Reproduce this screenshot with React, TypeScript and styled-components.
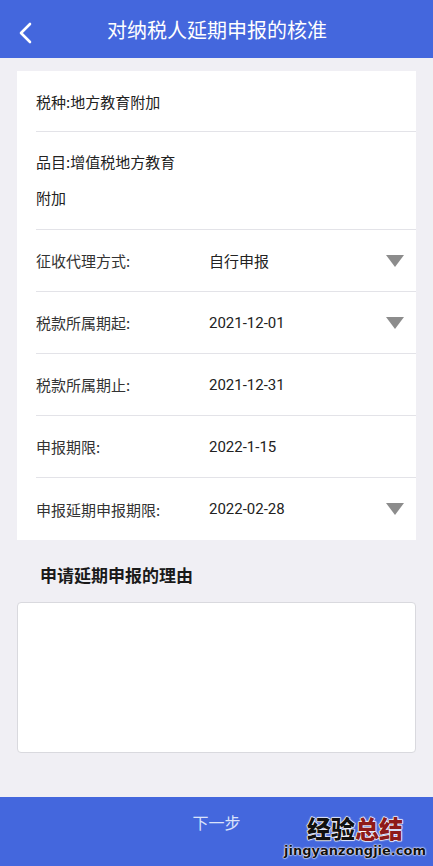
import React from "react";
import styled, { createGlobalStyle } from "styled-components";

const GlobalStyle = createGlobalStyle`
  html, body {
    margin: 0;
    padding: 0;
    background: #f0eff4;
    font-family: "Noto Sans CJK SC", Roboto, "Noto Sans", sans-serif;
  }
  * { box-sizing: border-box; }
`;

const Page = styled.div`
  width: 433px;
  height: 866px;
  display: flex;
  flex-direction: column;
  background: #f0eff4;
  position: relative;
`;

const Header = styled.div`
  height: 58px;
  background: #4467dd;
  display: flex;
  align-items: center;
  justify-content: center;
  position: relative;
  color: #fff;
  font-size: 20px;
  padding-left: 1px;
`;

const BackBtn = styled.div`
  position: absolute;
  left: 16px;
  top: 21px;
  width: 20px;
  height: 24px;
`;

const Content = styled.div`
  flex: 1;
  padding: 13px 17px 0 17px;
  display: flex;
  flex-direction: column;
`;

const Card = styled.div`
  background: #fff;
  padding-left: 19px;
`;

const Row = styled.div<{ $h: number; $last?: boolean }>`
  height: ${(p) => p.$h}px;
  display: flex;
  align-items: center;
  border-bottom: ${(p) => (p.$last ? "none" : "1px solid #e3e3e8")};
  font-size: 15px;
  color: #222;
`;

const MultiRow = styled.div`
  height: 98px;
  display: flex;
  flex-direction: column;
  justify-content: center;
  border-bottom: 1px solid #e3e3e8;
  font-size: 15px;
  color: #222;
  line-height: 36px;
  padding-bottom: 2px;
`;

const Label = styled.div`
  width: 173px;
  color: #333;
`;

const Value = styled.div`
  flex: 1;
  font-family: Roboto, "Noto Sans CJK SC", sans-serif;
  color: #222;
`;

const Arrow = styled.div`
  width: 0;
  height: 0;
  border-left: 9.5px solid transparent;
  border-right: 9.5px solid transparent;
  border-top: 12px solid #8c8c8c;
  margin-right: 12px;
`;

const SectionTitle = styled.div`
  font-size: 17px;
  font-weight: bold;
  color: #1a1a1a;
  padding: 22px 0 0 23px;
  height: 62px;
`;

const TextArea = styled.div`
  height: 151px;
  background: #fff;
  border: 1px solid #d9d9de;
  border-radius: 4px;
`;

const Footer = styled.div`
  height: 69px;
  background: #4467dd;
  display: flex;
  align-items: center;
  justify-content: center;
  color: #dbe3fa;
  font-size: 16px;
  padding-bottom: 20px;
`;

const Watermark = styled.div`
  position: absolute;
  right: 7px;
  bottom: 7px;
  display: flex;
  flex-direction: column;
  align-items: center;
`;

const WmTitle = styled.div`
  font-size: 24px;
  font-weight: 900;
  color: #111;
  -webkit-text-stroke: 1px #fff;
  paint-order: stroke fill;
  text-shadow: 0 0 2px #fff, 0 0 2px #fff;
  line-height: 30px;
`;

const WmRed = styled.span`
  color: #8e1a1a;
`;

const WmUrl = styled.div`
  font-family: "DejaVu Sans", sans-serif;
  font-size: 13px;
  font-weight: bold;
  color: #111;
  text-shadow: 0 0 2px #fff, 0 0 2px #fff, 0 0 1px #fff;
  line-height: 16px;
`;

const rows = [
  { label: "征收代理方式:", value: "自行申报", arrow: true },
  { label: "税款所属期起:", value: "2021-12-01", arrow: true },
  { label: "税款所属期止:", value: "2021-12-31", arrow: false },
  { label: "申报期限:", value: "2022-1-15", arrow: false },
  { label: "申报延期申报期限:", value: "2022-02-28", arrow: true },
];

export default function App() {
  return (
    <>
      <GlobalStyle />
      <Page>
        <Header>
          <BackBtn>
            <svg width="20" height="24" viewBox="0 0 20 24">
              <path d="M14 3 L5 12 L14 21" fill="none" stroke="#fff" strokeWidth="2.6" strokeLinecap="round" strokeLinejoin="round" />
            </svg>
          </BackBtn>
          对纳税人延期申报的核准
        </Header>
        <Content>
          <Card>
            <Row $h={61}>税种:地方教育附加</Row>
            <MultiRow>
              <div>品目:增值税地方教育</div>
              <div>附加</div>
            </MultiRow>
            {rows.map((r, i) => (
              <Row key={r.label} $h={62} $last={i === rows.length - 1}>
                <Label>{r.label}</Label>
                <Value>{r.value}</Value>
                {r.arrow && <Arrow />}
              </Row>
            ))}
          </Card>
          <SectionTitle>申请延期申报的理由</SectionTitle>
          <TextArea />
        </Content>
        <Footer>下一步</Footer>
        <Watermark>
          <WmTitle>
            经验<WmRed>总结</WmRed>
          </WmTitle>
          <WmUrl>jingyanzongjie.com</WmUrl>
        </Watermark>
      </Page>
    </>
  );
}
